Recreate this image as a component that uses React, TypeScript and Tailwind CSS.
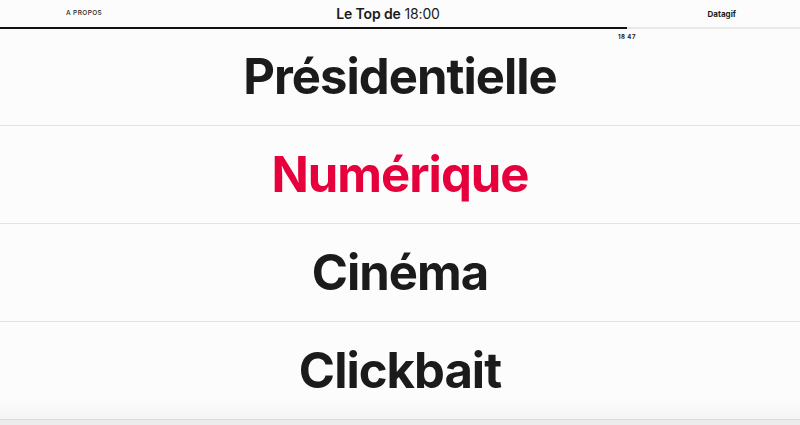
import React from 'react';

const topics = [
  { label: 'Présidentielle', active: false },
  { label: 'Numérique', active: true },
  { label: 'Cinéma', active: false },
  { label: 'Clickbait', active: false },
];

export default function App() {
  return (
    <div className="relative h-[425px] w-[800px] overflow-hidden bg-[#fcfcfc] font-['Inter',sans-serif] text-[#1b1b1b]">
      {/* Header */}
      <div className="relative flex h-[29px] items-center justify-between border-b-2 border-[#e8e8e8] px-[52px]">
        <span className="w-[120px] pl-[14px] text-[6.5px] font-medium tracking-[0.06em]">A PROPOS</span>
        <div className="relative right-[12px] text-[14px] tracking-[-0.01em]">
          <span className="font-semibold">Le Top de</span> <span className="font-normal">18:00</span>
        </div>
        <span className="flex w-[120px] justify-end pr-[12px] text-[8px] font-bold">Datagif</span>
        {/* progress */}
        <div className="absolute -bottom-[2px] left-0 h-[2px] w-[627px] bg-[#111]" />
        <span className="absolute left-[618px] top-[32px] text-[6px] font-bold tracking-[0.08em]">18 47</span>
      </div>

      {/* Topics */}
      <div className="flex flex-col">
        {topics.map((t) => (
          <div
            key={t.label}
            className="flex h-[98px] items-center justify-center border-b border-[#e3e3e3] first:h-[97px]"
          >
            <span
              className={`text-[49px] font-bold tracking-[-0.02em] ${t.active ? 'text-[#e6003c]' : 'text-[#1b1b1b]'}`}
            >
              {t.label}
            </span>
          </div>
        ))}
      </div>

      {/* Bottom bar */}
      <div className="absolute bottom-0 left-0 right-0 h-[26px] bg-gradient-to-b from-[rgba(252,252,252,0)] to-[#f2f2f2]" />
      <div className="absolute bottom-0 left-0 right-0 h-[6px] border-t border-[#dcdcdc] bg-[#ececec]" />
    </div>
  );
}
